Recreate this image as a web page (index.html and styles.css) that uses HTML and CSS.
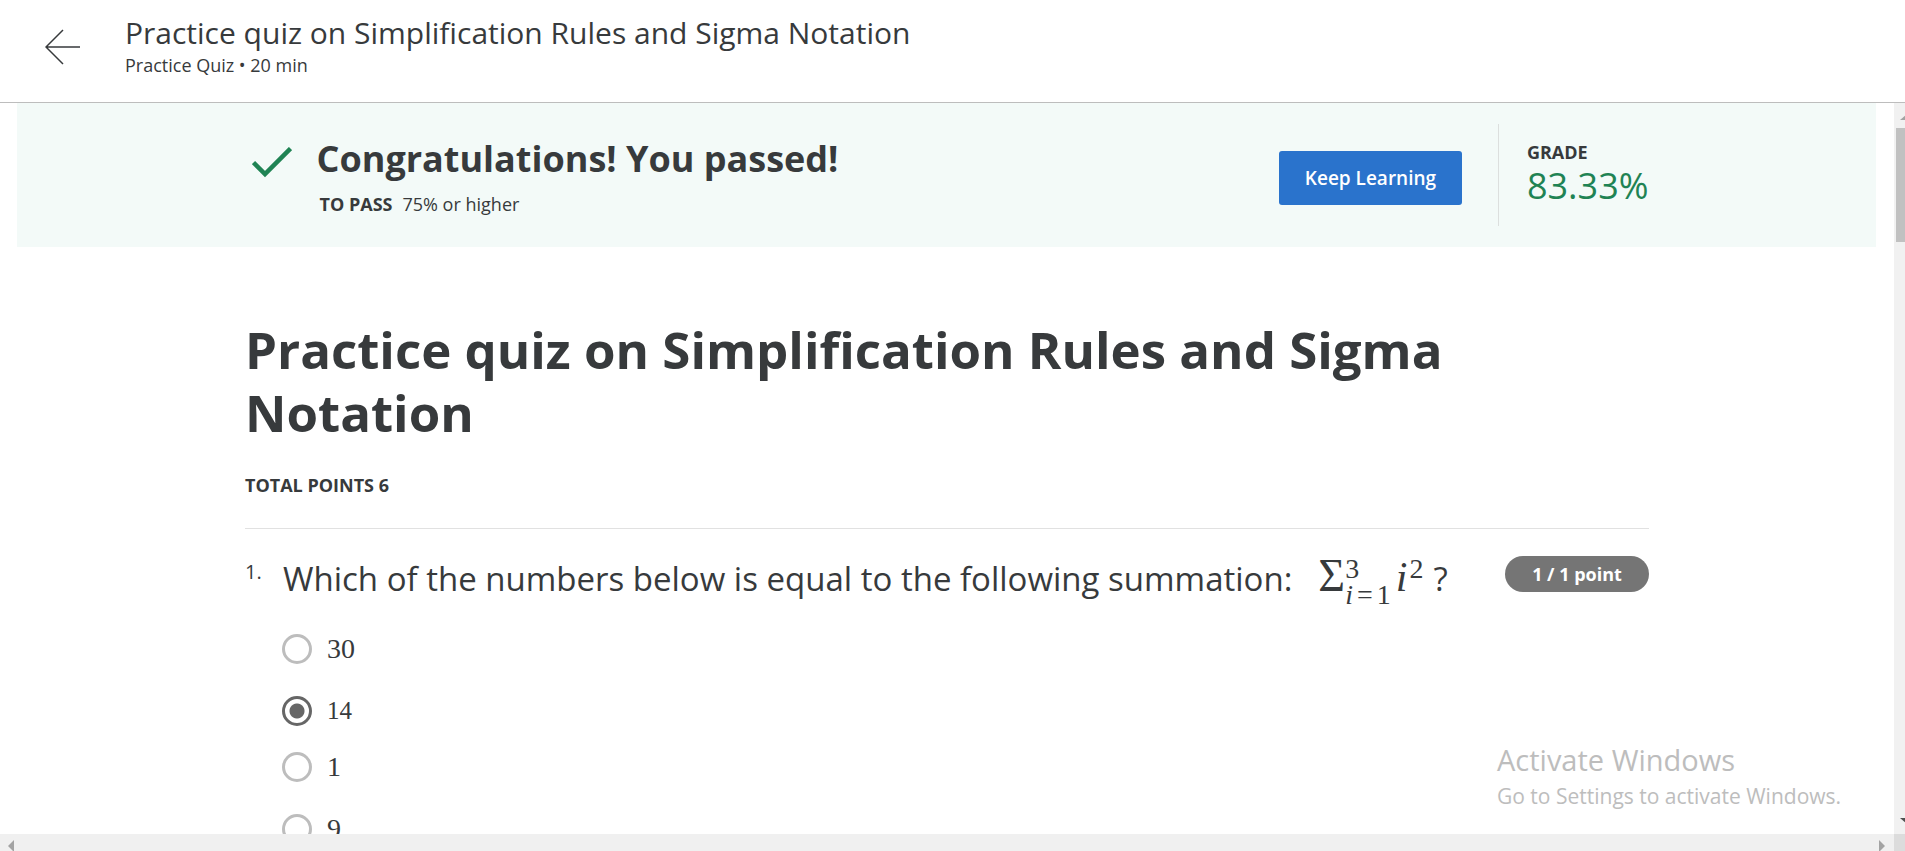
FILE: index.html
```html
<!DOCTYPE html>
<html lang="en">
<head>
<meta charset="utf-8">
<title>Practice quiz on Simplification Rules and Sigma Notation</title>
<link rel="stylesheet" href="styles.css">
</head>
<body>
<header class="topbar">
  <button class="back" type="button" aria-label="Back">
    <svg width="36" height="36" viewBox="0 0 36 36" fill="none" stroke="#373a3c" stroke-width="1.5"><path d="M35 18H1M18 1L1 18l17 17"/></svg>
  </button>
  <div class="topbar-text">
    <p class="topbar-title">Practice quiz on Simplification Rules and Sigma Notation</p>
    <p class="topbar-meta">Practice Quiz • 20 min</p>
  </div>
</header>
<div class="viewport">
  <main class="page">
    <section class="banner">
      <div class="banner-inner">
        <svg class="check" width="40" height="31" viewBox="0 0 40 31" fill="none" stroke="#1f8354" stroke-width="4.500"><path d="M1.500 15.500L13 27L38.500 1.500"/></svg>
        <div class="result">
          <h2 class="result-title">Congratulations! You passed!</h2>
          <p class="result-pass"><strong>TO PASS</strong><span>75% or higher</span></p>
        </div>
        <button class="keep" type="button">Keep Learning</button>
        <div class="grade">
          <span class="grade-label">GRADE</span>
          <span class="grade-value">83.33%</span>
        </div>
      </div>
    </section>
    <section class="quiz">
      <h1 class="quiz-title">Practice quiz on Simplification Rules and Sigma Notation</h1>
      <p class="points">TOTAL POINTS 6</p>
      <div class="question">
        <span class="number">1.</span>
        <fieldset class="body">
          <legend class="prompt">Which of the numbers below is equal to the following summation:
            <span class="math"><span class="sigma">Σ</span><span class="limits"><span>3</span><span class="lower"><i>i</i><span>=</span><span>1</span></span></span><i class="term">i</i><span class="power">2</span></span>
            <span>?</span></legend>
          <label class="option"><input type="radio" name="q1"><span>30</span></label>
          <label class="option option-small"><input type="radio" name="q1" checked><span>14</span></label>
          <label class="option"><input type="radio" name="q1"><span>1</span></label>
          <label class="option"><input type="radio" name="q1"><span>9</span></label>
        </fieldset>
        <span class="score">1 / 1 point</span>
      </div>
    </section>
  </main>
  <div class="vbar">
    <svg class="vbar-up" width="14" height="6" viewBox="0 0 14 6" fill="#a3a3a3"><path d="M0 6L7 0l7 6z"/></svg>
    <div class="vthumb"></div>
    <svg class="vbar-down" width="14" height="6" viewBox="0 0 14 6" fill="#505050"><path d="M0 0h14L7 6z"/></svg>
  </div>
</div>
<div class="hbar">
  <svg width="6" height="12" viewBox="0 0 6 12" fill="#a3a3a3"><path d="M6 0v12L0 6z"/></svg>
  <svg class="hbar-right" width="6" height="12" viewBox="0 0 6 12" fill="#a3a3a3"><path d="M0 0v12l6-6z"/></svg>
  <div class="corner"></div>
</div>
<aside class="watermark">
  <p class="watermark-title">Activate Windows</p>
  <p class="watermark-text">Go to Settings to activate Windows.</p>
</aside>
</body>
</html>
```

FILE: styles.css
```css
* { box-sizing: border-box; }

body {
  margin: 0;
  height: 100vh;
  display: flex;
  flex-direction: column;
  overflow: hidden;
  background: #fff;
  color: #373a3c;
  font-family: "Open Sans", sans-serif;
  font-size: 18px;
  line-height: 24px;
}

p, h1, h2 { margin: 0; }
button { font: inherit; border: 0; cursor: pointer; }

.topbar {
  display: flex;
  gap: 44px;
  padding: 13px 45px 25px;
  border-bottom: 1px solid #bdbdbd;
}
.back {
  display: flex;
  padding: 16px 0 0;
  background: none;
}
.topbar-title { font-size: 30px; line-height: 40px; }
.topbar-meta { line-height: 24px; }

.viewport {
  flex: 1;
  min-height: 0;
  display: flex;
  overflow: hidden;
}
.page { flex: 1; min-width: 0; }

.banner { margin: 0 18px 0 17px; background: #f3faf8; }
.banner-inner {
  display: flex;
  align-items: center;
  max-width: 1404px;
  height: 144px;
  margin: 0 auto;
}
.check { margin: 0 25px 26px 7px; }
.result { flex: 1; }
.result-title { font-size: 36px; line-height: 48px; font-weight: 700; }
.result-pass { display: flex; gap: 10px; padding: 9px 0 0 3px; }
.result-pass strong { font-weight: 700; }
.keep {
  width: 183px;
  height: 54px;
  margin: 6px 36px 0 0;
  padding: 0;
  border-radius: 3px;
  background: #2a73cc;
  color: #fff;
  font-size: 19px;
  font-weight: 600;
}
.grade {
  display: flex;
  flex-direction: column;
  justify-content: center;
  height: 102px;
  padding-left: 28px;
  border-left: 1px solid #dcdfde;
}
.grade-label { font-weight: 700; line-height: 22px; }
.grade-value { color: #1f8354; font-size: 36px; line-height: 46px; }

.quiz { max-width: 1404px; margin: 0 auto; padding-top: 71px; }
.quiz-title { font-size: 51px; line-height: 63px; font-weight: 700; }
.points { padding: 29px 0 31px; border-bottom: 1px solid #e1e1e1; font-weight: 700; }

.question { display: flex; align-items: flex-start; padding-top: 27px; }
.number { width: 37px; padding-top: 4px; font-size: 20px; }
.body { flex: 1; min-width: 0; margin: 0; padding: 0; border: 0; }
.prompt {
  display: flex;
  align-items: baseline;
  gap: 10px;
  padding: 0 0 26px 1px;
  font-size: 33px;
  line-height: 42px;
}
.math {
  display: flex;
  align-items: baseline;
  margin-left: 16px;
  font-family: "Liberation Serif", serif;
}
.sigma { font-size: 46px; line-height: 40px; }
.limits {
  align-self: flex-start;
  display: flex;
  flex-direction: column;
  font-size: 28px;
  line-height: 26px;
  margin-right: 5px;
}
.lower { display: flex; gap: 4px; }
.term { font-size: 42px; }
.power { align-self: flex-start; margin-left: 2px; font-size: 28px; line-height: 26px; }
.score {
  width: 144px;
  border-radius: 18px;
  background: #757575;
  color: #fff;
  font-weight: 700;
  line-height: 36px;
  text-align: center;
}

.option {
  display: flex;
  align-items: center;
  gap: 15px;
  height: 30px;
  margin-bottom: 32px;
  font-family: "Liberation Serif", serif;
  font-size: 28px;
}
.option-small { font-size: 25px; margin-bottom: 26px; }
.option input {
  appearance: none;
  width: 30px;
  height: 30px;
  margin: 0;
  border: 3px solid #bdbdbd;
  border-radius: 50%;
}
.option input:checked {
  border-color: #666;
  background: radial-gradient(circle, #666 7px, transparent 8px);
}

.vbar {
  display: flex;
  flex-direction: column;
  width: 11px;
  overflow: hidden;
  padding: 11px 0 10px;
  background: #f1f1f1;
}
.vbar svg { flex: none; margin-left: 6px; }
.vthumb { width: 20px; height: 114px; margin: 8px 0 0 2px; background: #c1c1c1; }
.vbar .vbar-down { margin-top: auto; }

.hbar {
  display: flex;
  align-items: flex-start;
  height: 17px;
  padding-left: 8px;
  background: #f0f0f0;
  overflow: hidden;
}
.hbar svg { flex: none; margin-top: 6px; }
.hbar .hbar-right { margin-left: auto; }
.corner { width: 11px; height: 17px; margin-left: 9px; background: #dcdcdc; }

.watermark {
  position: absolute;
  right: 65px;
  bottom: 39px;
  width: 343px;
  color: #bdbdbd;
  white-space: nowrap;
  pointer-events: none;
}
.watermark-title { font-size: 29px; line-height: 40px; }
.watermark-text { font-size: 21px; line-height: 32px; }
```
